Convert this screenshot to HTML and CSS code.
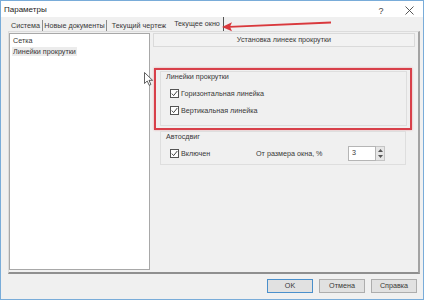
FILE: index.html
```html
<!DOCTYPE html>
<html>
<head>
    <meta charset="utf-8">
    <link rel="stylesheet" href="styles.css">
</head>
<body>
    <div class="window">
        <div class="titlebar">
            <span class="title">Параметры</span>
            <span class="tb-btn">?</span>
            <span class="tb-btn">
                <svg width="9" height="9" viewBox="0 0 9 9"><path d="M0.5 0.5L8.5 8.5M8.5 0.5L0.5 8.5" stroke="#444" stroke-width="0.9" fill="none"/></svg>
            </span>
        </div>

        <div class="tabs">
            <span class="tab tab-1">Система</span>
            <span class="tab tab-2">Новые документы</span>
            <span class="tab tab-3">Текущий чертеж</span>
            <span class="tab active">Текущее окно</span>
        </div>

        <div class="page">
            <div class="list">
                <div class="item"><span>Сетка</span></div>
                <div class="item"><span class="selected">Линейки прокрутки</span></div>
            </div>

            <div class="panel">
                <div class="panel-head">Установка линеек прокрутки</div>

                <!-- red frame drawn over the screenshot -->
                <div class="highlight">
                    <div class="group">
                        <div class="group-title">Линейки прокрутки</div>
                        <div class="check first">
                            <svg class="box" width="9" height="9" viewBox="0 0 9 9"><rect x="0.5" y="0.5" width="8" height="8" fill="#fff" stroke="#555"/><path d="M1.8 4.6L3.6 6.6L7.3 2" stroke="#333" stroke-width="0.9" fill="none"/></svg>
                            Горизонтальная линейка
                        </div>
                        <div class="check second">
                            <svg class="box" width="9" height="9" viewBox="0 0 9 9"><rect x="0.5" y="0.5" width="8" height="8" fill="#fff" stroke="#555"/><path d="M1.8 4.6L3.6 6.6L7.3 2" stroke="#333" stroke-width="0.9" fill="none"/></svg>
                            Вертикальная линейка
                        </div>
                    </div>
                </div>

                <div class="group auto">
                    <div class="group-title">Автосдвиг</div>
                    <div class="auto-row">
                        <div class="check auto-check">
                            <svg class="box" width="9" height="9" viewBox="0 0 9 9"><rect x="0.5" y="0.5" width="8" height="8" fill="#fff" stroke="#555"/><path d="M1.8 4.6L3.6 6.6L7.3 2" stroke="#333" stroke-width="0.9" fill="none"/></svg>
                            Включен
                        </div>
                        <span class="spin-label">От размера окна, %</span>
                        <span class="spin">
                            <span class="spin-value">3</span>
                            <span class="spin-btns">
                                <span class="spin-btn"><svg width="5" height="3" viewBox="0 0 5 3"><path d="M0 3L2.5 0L5 3Z" fill="#555"/></svg></span>
                                <span class="spin-btn"><svg width="5" height="3" viewBox="0 0 5 3"><path d="M0 0L2.5 3L5 0Z" fill="#555"/></svg></span>
                            </span>
                        </span>
                    </div>
                </div>
            </div>
        </div>

        <div class="footer">
            <span class="button default">OK</span>
            <span class="button">Отмена</span>
            <span class="button">Справка</span>
        </div>

        <!-- annotations on top: red arrow and mouse pointer -->
        <svg class="overlay" width="424" height="300" viewBox="0 0 424 300">
            <path d="M331 21.6L229 26L229 27.8L331 23.6Z" fill="#d9393d"/>
            <path d="M222 27L232 22.3L230 26.8L232 31.2Z" fill="#d9393d"/>
            <path d="M144.5 72.5L144.5 83.5L147.2 81L149.2 85.3L150.9 84.5L149 80.3L152.6 80.3Z" fill="#fff" stroke="#3a3a3a" stroke-width="0.8" stroke-linejoin="round"/>
        </svg>
    </div>
</body>
</html>
```

FILE: styles.css
```css
* {
    box-sizing: border-box;
}
body {
    margin: 0;
    background: #f0f0f0;
    font-family: "Liberation Sans", Arial, sans-serif;
    font-size: 7.2px;
    color: #383838;
}
.window {
    position: relative;
    width: 424px;
    height: 300px;
    border: 1px solid #79acd9;
    display: flex;
    flex-direction: column;
}

/* title bar */
.titlebar {
    height: 16px;
    background: #fff;
    display: flex;
    align-items: center;
}
.title {
    flex: 1;
    padding-left: 3px;
    font-size: 8px;
    color: #222;
}
.tb-btn {
    width: 28px;
    height: 16px;
    display: flex;
    align-items: center;
    justify-content: center;
    font-size: 9px;
    color: #444;
    padding-top: 3px;
}

/* tab strip */
.tabs {
    height: 14px;
    display: flex;
    align-items: flex-end;
    padding-left: 8px;
}
.tab {
    height: 11px;
    padding-top: 1px;
    line-height: 10px;
    text-align: center;
    white-space: nowrap;
    border-right: 1px solid #8c8c8c;
}
.tab-1 { width: 34px; }
.tab-2 { width: 64px; }
.tab-3 { width: 64px; border-right: none; }
.active {
    width: 53px;
    height: 14px;
    padding-top: 2px;
    border-right: 1px solid #555;
}

/* tab page */
.page {
    height: 243px;
    margin: 0 3px 0 7px;
    border-top: 1px solid #dcdcdc;
    border-left: 1px solid #dcdcdc;
    border-right: 2px solid #a3a3a3;
    border-bottom: 2px solid #8f8f8f;
    padding-top: 1px;
    display: flex;
}
.list {
    width: 141px;
    height: 237px;
    background: #fff;
    border: 1px solid #a8a8a8;
    padding: 1px 0 0 3px;
}
.item {
    height: 11px;
    line-height: 11px;
}
.selected {
    background: #ececec;
    padding: 0 1px;
    margin-left: -1px;
}
.panel {
    width: 262px;
    margin-left: 3px;
}
.panel-head {
    height: 14px;
    line-height: 12px;
    text-align: center;
    border: 1px solid #dadada;
    background: #f2f2f2;
}

/* groups */
.highlight {
    width: 258px;
    margin: 21px 0 0 1px;
    border: 2px solid #d8404a;
    box-shadow: 0 0 2px rgba(215, 70, 80, 0.45);
    padding: 1px 3px 2px 4px;
}
.group {
    border: 1px solid #dedede;
    padding: 0 0 9px 5px;
}
.group-title {
    height: 9px;
    line-height: 9px;
}
.check {
    height: 11px;
    display: flex;
    align-items: center;
    margin-left: 4px;
    white-space: nowrap;
}
.check.first { margin-top: 7px; }
.check.second { margin-top: 6px; }
.box {
    margin-right: 2px;
    flex: none;
}
.auto {
    width: 246px;
    margin: 1px 0 0 7px;
    padding-bottom: 3px;
}
.auto-row {
    height: 15px;
    margin-top: 5px;
    display: flex;
    align-items: center;
}
.auto-check {
    width: 86px;
}
.spin-label {
    width: 92px;
}
.spin {
    display: flex;
    height: 15px;
}
.spin-value {
    width: 28px;
    background: #fff;
    border: 1px solid #b5b5b5;
    padding-left: 3px;
    line-height: 12px;
}
.spin-btns {
    width: 9px;
    display: flex;
    flex-direction: column;
    border: 1px solid #c4c4c4;
    border-left: none;
}
.spin-btn {
    flex: 1;
    background: #e6e6e6;
    display: flex;
    align-items: center;
    justify-content: center;
}

/* bottom buttons */
.footer {
    flex: 1;
    display: flex;
    justify-content: flex-end;
    align-items: flex-start;
    gap: 6px;
    padding: 5px 6px 0 0;
}
.button {
    width: 46px;
    height: 14px;
    line-height: 12px;
    text-align: center;
    background: #e1e1e1;
    border: 1px solid #adadad;
}
.default {
    border-color: #4a8fcb;
}

.overlay {
    position: absolute;
    left: -1px;
    top: -1px;
    pointer-events: none;
}
```
